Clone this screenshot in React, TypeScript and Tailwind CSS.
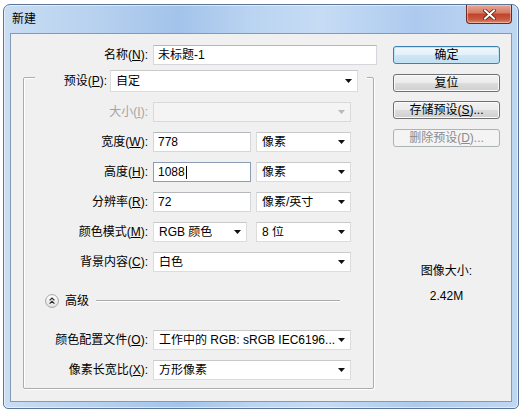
import React from "react";

const FONT = '"Liberation Sans", "Noto Sans CJK SC", sans-serif';

function Arrow({ disabled }: { disabled?: boolean }) {
  return (
    <svg width="7" height="4" viewBox="0 0 7 4" className="shrink-0">
      <path d="M0 0H7L3.5 4Z" fill={disabled ? "#b8b8b8" : "#111"} />
    </svg>
  );
}

function Select({
  className,
  value,
  disabled,
  tall,
}: {
  className: string;
  value?: string;
  disabled?: boolean;
  tall?: boolean;
}) {
  return (
    <div
      className={
        "flex items-center justify-between pl-[5px] pr-[5px] border " +
        (tall ? "h-[22px] " : "h-[20px] ") +
        (disabled
          ? "bg-[#f4f4f4] border-[#d9d9d9] "
          : "bg-white border-[#dcdcdc] border-t-[#c9c9c9] ") +
        className
      }
    >
      <span className="whitespace-nowrap overflow-hidden">{value}</span>
      <Arrow disabled={disabled} />
    </div>
  );
}

function Input({
  className,
  value,
  focused,
}: {
  className: string;
  value: string;
  focused?: boolean;
}) {
  return (
    <div
      className={
        "flex items-center h-[20px] pl-[4px] bg-white border " +
        (focused
          ? "border-[#8c9db3] "
          : "border-[#d3d6da] border-t-[#b4b7bb] ") +
        className
      }
    >
      <span>{value}</span>
      {focused && <span className="w-px h-[13px] bg-black ml-px" />}
    </div>
  );
}

function Row({
  label,
  children,
  gray,
  mt,
}: {
  label: React.ReactNode;
  children: React.ReactNode;
  gray?: boolean;
  mt: string;
}) {
  return (
    <div className={"flex items-center h-[20px] " + mt}>
      <div
        className={
          "w-[124px] text-right whitespace-nowrap " +
          (gray ? "text-[#a3a3a3]" : "text-black")
        }
      >
        {label}
      </div>
      <div className="ml-[5px] flex items-center">{children}</div>
    </div>
  );
}

function Button({
  children,
  kind,
  mt,
}: {
  children: React.ReactNode;
  kind: "default" | "normal" | "disabled";
  mt: string;
}) {
  const cls =
    kind === "default"
      ? "border-[#3c7fb1] bg-[linear-gradient(#eef7fc,#e3f1fa_50%,#cfe6f5_50%,#c3dff2)] shadow-[inset_0_0_0_1px_#c4e5f6]"
      : kind === "normal"
      ? "border-[#707070] bg-[linear-gradient(#f2f2f2,#ebebeb_50%,#dddddd_50%,#cfcfcf)] shadow-[inset_0_0_0_1px_#fafafa]"
      : "border-[#adb2b5] bg-[#f4f4f4] text-[#8b8b8b]";
  return (
    <div
      className={
        "w-[107px] h-[18px] rounded-[3px] border flex items-center justify-center whitespace-nowrap " +
        cls +
        " " +
        mt
      }
    >
      {children}
    </div>
  );
}

export default function App() {
  return (
    <div
      className="w-[525px] h-[412px] bg-white overflow-hidden text-[12px] leading-none text-black"
      style={{ fontFamily: FONT }}
    >
      <div className="ml-[3px] mt-[4px] w-[516px] h-[405px] rounded-t-[7px] rounded-b-[5px] border border-[#5a7596] bg-[linear-gradient(90deg,#c9ddf3_0%,#b7d1ef_18%,#a3c3ea_34%,#bad4f1_48%,#c6dcf5_62%,#adcaee_80%,#c0d7f2_100%)] shadow-[inset_0_0_0_1px_rgba(255,255,255,0.55)] flex flex-col">
        {/* title bar */}
        <div className="h-[28px] flex items-start shrink-0">
          <div className="pl-[8px] pt-[8px] text-[12px]">新建</div>
          <div className="ml-auto mr-[6px] w-[46px] h-[19px] rounded-b-[4px] border border-t-0 border-[#6e2a1f] bg-[linear-gradient(#e8a794,#d47a62_45%,#c2412a_50%,#c85a3f_80%,#de8a6c)] shadow-[inset_0_0_0_1px_rgba(255,220,210,0.5)] flex items-center justify-center">
            <svg width="13" height="11" viewBox="0 0 13 11">
              <path
                d="M2 1.5L11 9.5M11 1.5L2 9.5"
                stroke="#5a1c12"
                strokeWidth="3.6"
                strokeLinecap="square"
              />
              <path
                d="M2 1.5L11 9.5M11 1.5L2 9.5"
                stroke="#ffffff"
                strokeWidth="2"
                strokeLinecap="square"
              />
            </svg>
          </div>
        </div>

        {/* client */}
        <div className="mx-[6px] h-[369px] border border-[#8399b6] bg-[#f0f0f0] flex shrink-0">
          {/* left column */}
          <div className="w-[372px] flex flex-col">
            <div className="flex items-center h-[20px] mt-[11px]">
              <div className="w-[137px] text-right whitespace-nowrap">
                名称(<u>N</u>):
              </div>
              <Input className="ml-[5px] w-[224px]" value="未标题-1" />
            </div>

            {/* group box */}
            <div className="ml-[12px] mt-[12px] w-[351px] h-[312px] border border-[#acacac] rounded-[2px] shadow-[inset_1px_1px_0_#ffffff,1px_1px_0_#ffffff] flex flex-col">
              <div className="-mt-[8px] ml-[11px] w-[332px] h-[22px] bg-[#f0f0f0] flex items-center">
                <div className="w-[72px] text-right whitespace-nowrap">
                  预设(<u>P</u>):
                </div>
                <Select className="ml-[3px] w-[248px]" value="自定" tall />
              </div>

              <Row
                mt="mt-[10px]"
                gray
                label={
                  <>
                    大小(<u>I</u>):
                  </>
                }
              >
                <Select className="w-[198px]" disabled />
              </Row>
              <Row
                mt="mt-[10px]"
                label={
                  <>
                    宽度(<u>W</u>):
                  </>
                }
              >
                <Input className="w-[98px]" value="778" />
                <Select className="ml-[5px] w-[95px]" value="像素" />
              </Row>
              <Row
                mt="mt-[10px]"
                label={
                  <>
                    高度(<u>H</u>):
                  </>
                }
              >
                <Input className="w-[98px]" value="1088" focused />
                <Select className="ml-[5px] w-[95px]" value="像素" />
              </Row>
              <Row
                mt="mt-[10px]"
                label={
                  <>
                    分辨率(<u>R</u>):
                  </>
                }
              >
                <Input className="w-[98px]" value="72" />
                <Select className="ml-[5px] w-[95px]" value="像素/英寸" />
              </Row>
              <Row
                mt="mt-[10px]"
                label={
                  <>
                    颜色模式(<u>M</u>):
                  </>
                }
              >
                <Select className="w-[94px]" value="RGB 颜色" />
                <Select className="ml-[9px] w-[95px]" value="8 位" />
              </Row>
              <Row
                mt="mt-[10px]"
                label={
                  <>
                    背景内容(<u>C</u>):
                  </>
                }
              >
                <Select className="w-[198px]" value="白色" />
              </Row>

              {/* advanced */}
              <div className="mt-[22px] h-[14px] flex items-center">
                <svg
                  width="14"
                  height="14"
                  viewBox="0 0 14 14"
                  className="ml-[21px] shrink-0"
                >
                  <defs>
                    <linearGradient id="cg" x1="0" y1="0" x2="0" y2="1">
                      <stop offset="0" stopColor="#ffffff" />
                      <stop offset="1" stopColor="#e2e2e2" />
                    </linearGradient>
                  </defs>
                  <circle cx="7" cy="7" r="6.4" fill="url(#cg)" stroke="#a2a2a2" />
                  <path
                    d="M4.6 6.4L7 4.1L9.4 6.4M4.6 9.6L7 7.3L9.4 9.6"
                    fill="none"
                    stroke="#2b2b2b"
                    strokeWidth="1.3"
                  />
                </svg>
                <span className="ml-[6px]">高级</span>
                <div className="ml-[7px] w-[244px] h-[2px] border-t border-[#a9a9a9] bg-white" />
              </div>

              <Row
                mt="mt-[22px]"
                label={
                  <>
                    颜色配置文件(<u>O</u>):
                  </>
                }
              >
                <Select
                  className="w-[198px]"
                  value="工作中的 RGB: sRGB IEC6196..."
                />
              </Row>
              <Row
                mt="mt-[10px]"
                label={
                  <>
                    像素长宽比(<u>X</u>):
                  </>
                }
              >
                <Select className="w-[198px]" value="方形像素" />
              </Row>
            </div>
          </div>

          {/* right column */}
          <div className="ml-[10px] w-[107px] flex flex-col items-center">
            <Button kind="default" mt="mt-[12px]">
              确定
            </Button>
            <Button kind="normal" mt="mt-[10px]">
              复位
            </Button>
            <Button kind="normal" mt="mt-[9px]">
              存储预设(<u>S</u>)...
            </Button>
            <Button kind="disabled" mt="mt-[10px]">
              删除预设(<u>D</u>)...
            </Button>
            <div className="mt-[118px] whitespace-nowrap">图像大小:</div>
            <div className="mt-[13px]">2.42M</div>
          </div>
        </div>
      </div>
    </div>
  );
}
